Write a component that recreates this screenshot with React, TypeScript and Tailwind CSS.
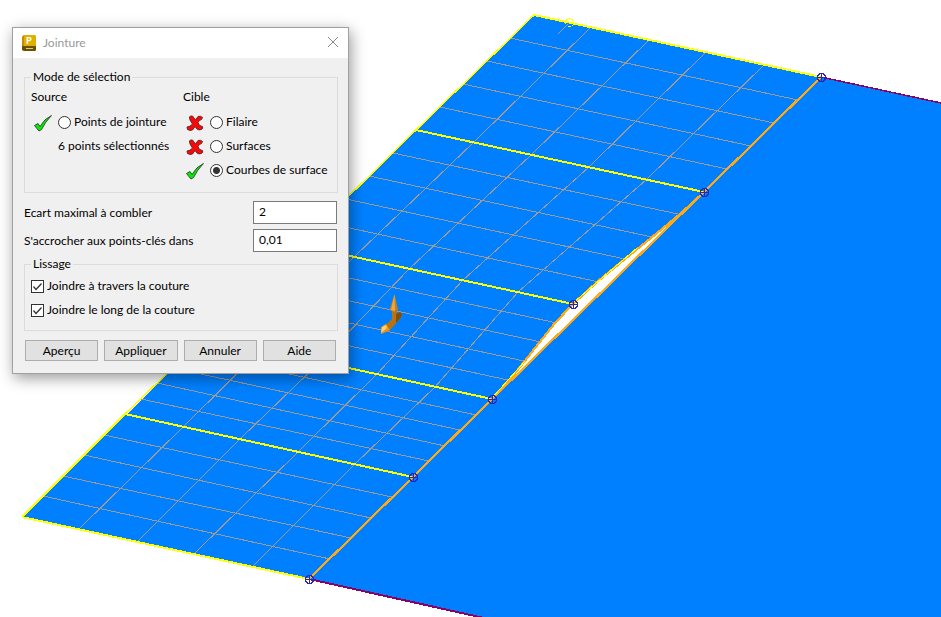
import { useState } from "react";

type Pt = [number, number];

const LEFT: Pt[] = [[534, 15], [416, 130], [299, 245], [205, 337], [125, 414], [22, 517]];
const RIGHT: Pt[] = [[821, 77], [704, 192], [573, 304], [492, 399], [413, 477], [309, 579]];
const SEAM: Pt[] = [[704, 192], [680, 214], [651, 238], [625, 259], [598, 281], [573, 304], [555, 323], [539, 343], [524, 362], [509, 381], [492, 399]];
const STEPS = 5;

const mix = (a: Pt, b: Pt, t: number): Pt => [a[0] + (b[0] - a[0]) * t, a[1] + (b[1] - a[1]) * t];
const pts = (list: Pt[]) => list.map(p => p.map(Math.round).join(",")).join(" ");

const ROWS: [Pt, Pt][] = [];
LEFT.slice(0, -1).forEach((_, i) => {
  for (let k = 1; k < STEPS; k++) {
    const t = k / STEPS;
    ROWS.push([mix(LEFT[i], LEFT[i + 1], t), mix(RIGHT[i], RIGHT[i + 1], t)]);
  }
});
const COLS = [0.2, 0.4, 0.6, 0.8].map(t => LEFT.map((p, i) => mix(p, RIGHT[i], t)));

function Scene() {
  return (
    <svg className="absolute inset-0 h-full w-full" viewBox="0 0 941 617" preserveAspectRatio="xMinYMin slice" fill="none" shapeRendering="crispEdges" role="img" aria-label="Vue 3D">
      <polygon points="534,15 821,77 941,103 941,617 481,617 309,579 22,517" fill="#0080ff" />
      <polygon points={pts(SEAM)} fill="#fff" />

      <g stroke="#a09a94">
        {ROWS.map((r, i) => <polyline key={i} points={pts(r)} />)}
        {COLS.map((c, i) => <polyline key={i} points={pts(c)} />)}
      </g>

      {/* patch borders */}
      <g stroke="#ff0" strokeWidth="2">
        {LEFT.map((p, i) => <polyline key={i} points={pts([p, RIGHT[i]])} />)}
        <polyline points={pts(LEFT)} strokeWidth="1.5" />
      </g>
      <path d="M821 77 941 103" stroke="#8c0064" strokeWidth="1.5" />
      <path d="M309 579 484 618" stroke="#8c0064" strokeWidth="2" />

      {/* seam and target edge */}
      <polyline points="821,77 704,192 492,399 413,477 309,579" stroke="#ffaa14" strokeWidth="2.2" />
      <polyline points={pts(SEAM)} stroke="#ffaa14" strokeWidth="2.2" />
      <path d="M637 248 573 303M525 361 492 398" stroke="#ff0" />

      <g stroke="#2828b4">
        {RIGHT.map(([x, y]) => (
          <path key={x} d={`M${x - 4} ${y + 0.5}h9M${x + 0.5} ${y - 4}v9M${x - 1} ${y - 3.5}h3l2.5 2.5v3l-2.5 2.5h-3l-2.5-2.5v-3z`} />
        ))}
      </g>
      <circle cx="569.5" cy="22.5" r="4" stroke="#ff0" />
      <path d="M558 34 568 24" stroke="#a09a94" />

      {/* normal / tangent handle */}
      <g shapeRendering="auto">
        <path d="M392 311H397V314L399 312Q402 312 402 315L400 319 389 331 381 334 381 327 388 323 392 319Z" fill="#b87212" />
        <path d="M396 314 400 312Q402 313 402 315L400 319 396 323Z" fill="#7d5010" />
        <path d="M394.500 294 398 310 394 312 389.500 310Z" fill="#c8801a" />
        <path d="M394.500 294 395 311 391 310Z" fill="#f0a63c" />
        <path d="M381 334 381.500 327 386 324 390 330Z" fill="#e8941c" />
        <path d="M381 333 382 327 386 325 387 328Z" fill="#ffd070" />
      </g>
    </svg>
  );
}

function Tick() {
  return (
    <svg className="h-5 w-5 shrink-0" viewBox="0 0 20 20" aria-hidden="true">
      <path d="M1.500 13.500 5 11.500 7 14.500Q11 7 18.500 3.500 12 10 8.500 17.500L6 19Z" fill="#00f000" stroke="#3c4c3c" strokeLinejoin="round" />
    </svg>
  );
}

function Cross() {
  return (
    <svg className="h-5 w-5 shrink-0" viewBox="0 0 20 20" aria-hidden="true">
      <path d="M4.500 5Q5 3.500 7.500 4L10.500 8 13 4.500Q15.500 3.500 17.500 5.500L16.500 7.500Q14 8 13 10.500L14.500 13.500 17.500 14.500Q18.500 16.500 16.500 17.500 13.500 18.500 12 17L10 14.500 7.500 18Q5 19 2.500 17.500L2 15Q5 15 7.500 12L5 8Z" fill="#f80808" stroke="#6b2a2a" strokeLinejoin="round" />
    </svg>
  );
}

const RADIO = "h-[13px] w-[13px] shrink-0 appearance-none rounded-full border border-[#333] bg-white checked:bg-[radial-gradient(circle,#333_0_3px,#fff_4px)]";
const FIELD = "h-[23px] w-[84px] border border-[#7a7a7a] bg-white px-[5px] pb-[2px] outline-none";
const TARGETS = [
  { label: "Filaire", ok: false },
  { label: "Surfaces", ok: false },
  { label: "Courbes de surface", ok: true },
];

function Check({ label }: { label: string }) {
  const [on, setOn] = useState(true);
  return (
    <label className="flex h-6 items-center gap-[3px]">
      <span className="relative h-[13px] w-[13px]">
        <input type="checkbox" checked={on} onChange={e => setOn(e.target.checked)} className="block h-[13px] w-[13px] appearance-none border border-[#333] bg-white" />
        {on && (
          <svg className="pointer-events-none absolute inset-0" viewBox="0 0 13 13" fill="none" aria-hidden="true">
            <path d="M2.500 6.500 5 9.500 10.500 3.500" stroke="#333" strokeWidth="1.300" />
          </svg>
        )}
      </span>
      {label}
    </label>
  );
}

export default function App() {
  const [source, setSource] = useState(false);
  const [target, setTarget] = useState("Courbes de surface");
  const [gap, setGap] = useState("2");
  const [snap, setSnap] = useState("0,01");

  return (
    <main className="relative min-h-screen overflow-hidden bg-white font-[Lato,'Open_Sans',sans-serif] text-[12px] leading-4 text-black">
      <Scene />
      <form onSubmit={e => e.preventDefault()} className="absolute left-3 top-[27px] w-[337px] border border-[#a0a0a0] bg-[#f0f0f0] pb-3 shadow-[2px_4px_14px_rgba(0,0,0,0.4)]">
        <header className="flex h-[30px] items-center bg-white pl-2 pr-[7px]">
          <svg className="h-4 w-4" viewBox="0 0 16 16" aria-hidden="true">
            <path d="M1 2 3 0H14L15 1V15L14 16H3L1 15Z" fill="#e0b000" />
            <path d="M1 2 3 0V11H1Z" fill="#c08c00" />
            <path d="M1 11H15V15L14 16H3L1 15Z" fill="#6b5000" />
            <text x="5" y="9" fontSize="9" fontWeight="900" fill="#fff">P</text>
            <path d="M5 13.500H12" stroke="#d8c890" />
          </svg>
          <h1 className="ml-[6px] flex-1 text-[#999]">Jointure</h1>
          <button type="button" aria-label="Fermer" className="h-4 w-4">
            <svg viewBox="0 0 16 16" fill="none" stroke="#888" aria-hidden="true"><path d="M3 2 13 12M13 2 3 12" /></svg>
          </button>
        </header>

        <div className="pl-[11px] pr-[10px] pt-[11px]">
          <fieldset className="h-[124px] border border-[#dcdcdc] px-[6px]">
            <legend className="px-[2px]">Mode de sélection</legend>
            <div className="flex whitespace-nowrap pt-1">
              <div className="w-[152px]">
                <h2>Source</h2>
                <div className="mt-[5px] flex h-6 items-center gap-[5px] pl-[2px]">
                  <Tick />
                  <label className="flex items-center gap-[3px]">
                    <input type="radio" name="source" checked={source} onChange={() => setSource(true)} className={RADIO} />
                    Points de jointure
                  </label>
                </div>
                <p className="pl-[27px] leading-6">6 points sélectionnés</p>
              </div>
              <div>
                <h2>Cible</h2>
                <div className="mt-[5px]">
                  {TARGETS.map(t => (
                    <div key={t.label} className="flex h-6 items-center gap-[5px] pl-[2px]">
                      {t.ok ? <Tick /> : <Cross />}
                      <label className="flex items-center gap-[3px]">
                        <input type="radio" name="cible" checked={target === t.label} onChange={() => setTarget(t.label)} className={RADIO} />
                        {t.label}
                      </label>
                    </div>
                  ))}
                </div>
              </div>
            </div>
          </fieldset>

          <div className="mt-2 flex flex-col gap-[5px] pr-px">
            <div className="flex items-center justify-between">
              <label htmlFor="gap">Ecart maximal à combler</label>
              <input id="gap" value={gap} onChange={e => setGap(e.target.value)} className={FIELD} />
            </div>
            <div className="flex items-center justify-between">
              <label htmlFor="snap">S'accrocher aux points-clés dans</label>
              <input id="snap" value={snap} onChange={e => setSnap(e.target.value)} className={FIELD} />
            </div>
          </div>

          <fieldset className="mt-1 border border-[#dcdcdc] px-[6px] pb-2 pt-[2px]">
            <legend className="px-[2px]">Lissage</legend>
            <Check label="Joindre à travers la couture" />
            <Check label="Joindre le long de la couture" />
          </fieldset>

          <div className="mt-[9px] grid grid-cols-4 gap-[6px] pl-px pr-[2px]">
            {["Aperçu", "Appliquer", "Annuler", "Aide"].map(b => (
              <button key={b} type="button" className="h-[21px] border border-[#adadad] bg-[#e1e1e1] leading-[19px]">{b}</button>
            ))}
          </div>
        </div>
      </form>
    </main>
  );
}
